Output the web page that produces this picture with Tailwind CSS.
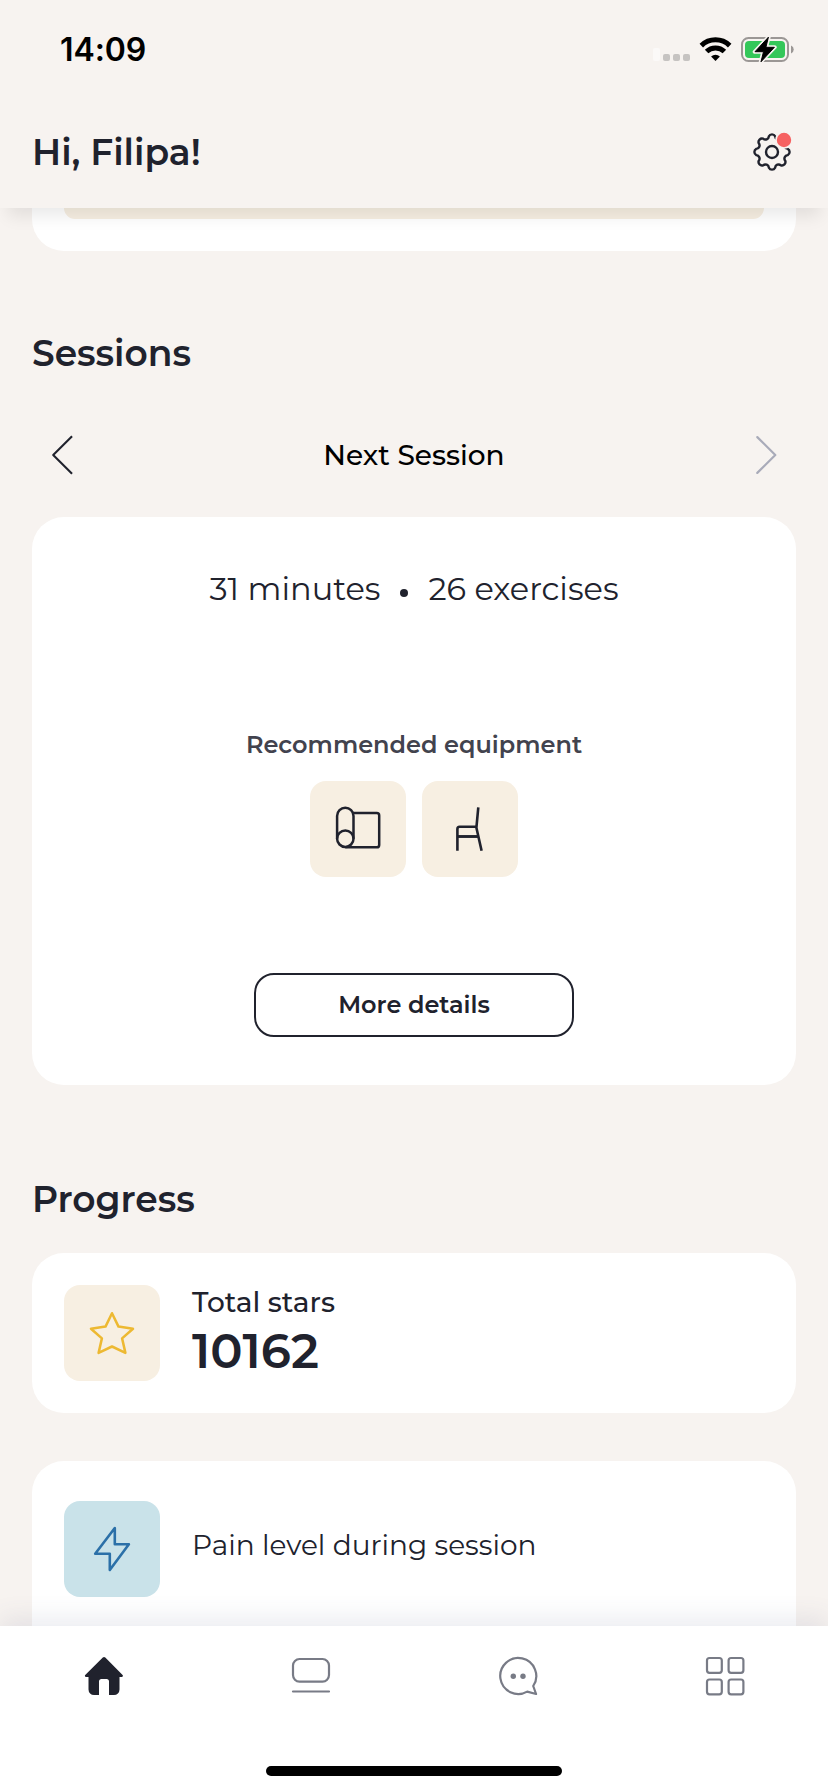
<!DOCTYPE html>
<html lang="en">
<head>
<meta charset="utf-8">
<title>Home</title>
<script src="https://cdn.jsdelivr.net/npm/@tailwindcss/browser@4"></script>
</head>
<body class="flex h-[1792px] w-[828px] flex-col overflow-hidden bg-[#f7f3f0] font-['Montserrat','Inter',sans-serif] text-[#20222d]">

<header class="z-10 flex h-[208px] shrink-0 flex-col bg-[#f7f3f0] shadow-[0_16px_16px_-8px_rgba(0,0,0,0.085)]">
  <div class="flex h-[100px] items-center justify-between pl-[60px] pr-[33px]">
    <span class="font-['Inter',sans-serif] text-[32px] font-semibold leading-[100px] tracking-[-0.1px] text-black">14:09</span>
    <svg class="h-[28px] w-[142px]" viewBox="653 36 142 28" fill="none">
      <rect x="653" y="48" width="7" height="13" rx="2" fill="#fbf9f8"/>
      <g fill="#c6c3c1"><rect x="663" y="54" width="7" height="7" rx="2"/><rect x="673" y="54" width="7" height="7" rx="2"/><rect x="683" y="54" width="7" height="7" rx="2"/></g>
      <g stroke="#000" stroke-width="5"><path d="M701.3 45.6a20.4 20.4 0 0 1 28.4 0"/><path d="M706.6 51.5a12.8 12.8 0 0 1 17.8 0"/></g>
      <path d="M715.5 61l-4.4-4.6a6.4 6.4 0 0 1 8.8 0z" fill="#000"/>
      <rect x="742" y="38" width="46" height="23" rx="6.5" stroke="#9b9795" stroke-width="2"/>
      <rect x="745" y="41" width="40" height="17" rx="4" fill="#34c759"/>
      <path d="M791 45.5a4.3 4.3 0 0 1 0 8z" fill="#9b9795"/>
      <path d="M768.7 37l-14 14.8h8.6L760.7 62l14-14.8h-8.6z" fill="#000" stroke="#f7f3f0" stroke-width="4" stroke-linejoin="round"/>
      <path d="M768.4 37.2l-13.4 14.5h8.5L761 61.8l13.4-14.5h-8.5z" fill="#000" stroke="#000" stroke-width="1" stroke-linejoin="round"/>
    </svg>
  </div>
  <div class="flex h-[104px] items-center justify-between pl-8 pr-[34px]">
    <h1 class="text-[36px] font-semibold leading-[104px]">Hi, Filipa!</h1>
    <svg class="h-[44px] w-[44px]" viewBox="-22 -22 44 44" fill="none" stroke="#20222d" stroke-width="2.4">
      <path stroke-linejoin="round" d="M15.69-3.12A3.5 3.5 0 0 1 15.69 3.12A3.5 3.5 0 0 0 13.3 8.89A3.5 3.5 0 0 1 8.89 13.3A3.5 3.5 0 0 0 3.12 15.69A3.5 3.5 0 0 1-3.12 15.69A3.5 3.5 0 0 0-8.89 13.3A3.5 3.5 0 0 1-13.3 8.89A3.5 3.5 0 0 0-15.69 3.12A3.5 3.5 0 0 1-15.69-3.12A3.5 3.5 0 0 0-13.3-8.89A3.5 3.5 0 0 1-8.89-13.3A3.5 3.5 0 0 0-3.12-15.69A3.5 3.5 0 0 1 3.12-15.69A3.5 3.5 0 0 0 8.89-13.3A3.5 3.5 0 0 1 13.3-8.89A3.5 3.5 0 0 0 15.69-3.12z"/>
      <circle r="6"/>
      <circle cx="12" cy="-12" r="8" fill="#f66161" stroke="#f7f3f0" stroke-width="1.6"/>
    </svg>
  </div>
</header>

<main class="flex flex-1 flex-col overflow-hidden px-8">
  <div class="h-[43px] shrink-0 rounded-b-[32px] bg-white px-8">
    <div class="h-[11px] rounded-b-2xl bg-[#f7efe2]"></div>
  </div>

  <h2 class="mt-[73px] h-[58px] shrink-0 text-[36px] font-semibold leading-[58px]">Sessions</h2>

  <div class="mt-[45px] flex h-[56px] shrink-0 items-center justify-between px-4">
    <svg class="h-[44px] w-7" viewBox="48 433 28 44" fill="none" stroke="#20222d" stroke-width="2.1" stroke-linejoin="round" stroke-linecap="square"><path d="M71.3 437.1L53.2 455l18.1 17.9"/></svg>
    <span class="text-[28px] font-medium text-black">Next Session</span>
    <svg class="h-[44px] w-7" viewBox="752 433 28 44" fill="none" stroke="#a9abb9" stroke-width="2.2" stroke-linejoin="round" stroke-linecap="round"><path d="M757.3 437.1L775.3 455l-18 17.9"/></svg>
  </div>

  <section class="mt-[34px] flex h-[568px] shrink-0 flex-col items-center rounded-[32px] bg-white pt-[48px]">
    <div class="flex h-[48px] items-center text-[32px] leading-[48px]">
      <span>31 minutes</span>
      <i class="mx-[20px] mt-[7px] h-2 w-2 rounded-full bg-[#20222d]"></i>
      <span>26 exercises</span>
    </div>
    <div class="mt-[112px] h-[40px] text-[24px] font-semibold leading-[40px] text-[#42434e]">Recommended equipment</div>
    <div class="mt-4 flex gap-4">
      <div class="flex h-24 w-24 items-center justify-center rounded-2xl bg-[#f7efe2]">
        <svg class="h-12 w-12" viewBox="0 0 48 48" fill="none" stroke="#20222d" stroke-width="2.5"><path d="M3.1 33.7V11a8.2 8.2 0 0 1 16.4 0v22.7"/><circle cx="11.3" cy="33.7" r="8.2"/><path d="M18.8 8.1h24a2.4 2.4 0 0 1 2.4 2.4v29.4a2.4 2.4 0 0 1-2.4 2.4H11.3"/></svg>
      </div>
      <div class="flex h-24 w-24 items-center justify-center rounded-2xl bg-[#f7efe2]">
        <svg class="h-12 w-12" viewBox="0 0 48 48" fill="none" stroke="#20222d" stroke-width="2.6"><path d="M32.3 2.3L30.4 22.7l5.2 23"/><path d="M11.4 45.8V24a2.2 2.2 0 0 1 2.2-2.2h16.8"/><path d="M11.4 31.5h21" stroke-width="2.9"/></svg>
      </div>
    </div>
    <button class="mt-24 h-16 w-80 rounded-[20px] border-2 border-[#20222d] text-[24px] font-semibold">More details</button>
  </section>

  <h2 class="mt-[85px] h-[58px] shrink-0 text-[36px] font-semibold leading-[58px]">Progress</h2>

  <section class="mt-[25px] flex h-40 shrink-0 gap-8 rounded-[32px] bg-white p-8">
    <div class="flex h-24 w-24 items-center justify-center rounded-2xl bg-[#f7efe2]">
      <svg class="h-12 w-12" viewBox="0 0 48 48" fill="none" stroke="#edb932" stroke-width="2.5" stroke-linejoin="round"><path d="M24 4.2l6.500 13.400 14.500 2.100-10.900 9.700 3.300 14.500L24 37.500l-13.400 6.400L13.900 29.400 3 19.700l14.500-2.100z"/></svg>
    </div>
    <div class="flex flex-col">
      <div class="h-[34px] text-[28px] font-medium leading-[34px]">Total stars</div>
      <div class="h-[64px] text-[48px] font-semibold leading-[64px]">10162</div>
    </div>
  </section>

  <section class="mt-12 flex h-[200px] shrink-0 gap-8 rounded-t-[32px] bg-white px-8 pt-10">
    <div class="flex h-24 w-24 items-center justify-center rounded-2xl bg-[#c9e2e9]">
      <svg class="h-12 w-12" viewBox="0 0 48 48" fill="none" stroke="#2b70a8" stroke-width="2.6" stroke-linejoin="round"><path d="M26.8 3v16.2h14.1L21.8 45V28.8H7.2z"/></svg>
    </div>
    <div class="h-[88px] text-[28px] leading-[88px]">Pain level during session</div>
  </section>
</main>

<nav class="z-10 flex h-[166px] shrink-0 flex-col items-center bg-white shadow-[0_-8px_24px_rgba(70,85,130,0.11)]">
  <div class="mt-[30px] grid h-10 w-full grid-cols-4 justify-items-center">
    <svg class="h-10 w-10" viewBox="84 1656 40 40" fill="#20222d"><path d="M102.8 1657.5a1.8 1.8 0 0 1 2.5 0l17.3 17.4a1.2 1.2 0 0 1-.8 2H119.5V1689.5a5.5 5.5 0 0 1-5.5 5.5H109V1681.5a2.5 2.5 0 0 0-2.5-2.5H101.5a2.5 2.5 0 0 0-2.5 2.5V1695H94a5.500 5.500 0 0 1-5.500-5.500V1677H86a1.200 1.200 0 0 1-.8-2z"/></svg>
    <svg class="h-10 w-10" viewBox="291 1656 40 40" fill="none" stroke="#787b86" stroke-width="2.2"><rect x="293" y="1659" width="36" height="22.6" rx="6.5"/><path d="M293 1691.5h36" stroke-linecap="round"/></svg>
    <svg class="h-10 w-10" viewBox="498 1656 40 40" fill="none" stroke="#787b86" stroke-width="2.2" stroke-linejoin="round"><path d="M533.2 1686a18 18 0 1 0-6 5.600l8.900 2.400z"/><g fill="#787b86" stroke="none"><circle cx="513.3" cy="1676.2" r="2.7"/><circle cx="523" cy="1676.2" r="2.7"/></g></svg>
    <svg class="h-10 w-10" viewBox="705 1656 40 40" fill="none" stroke="#787b86" stroke-width="2.2"><rect x="707" y="1658" width="14.8" height="14.8" rx="2.5"/><rect x="728.6" y="1658" width="14.8" height="14.8" rx="2.5"/><rect x="707" y="1679.5" width="14.8" height="14.8" rx="2.5"/><rect x="728.6" y="1679.5" width="14.8" height="14.8" rx="2.5"/></svg>
  </div>
  <div class="mt-[70px] h-[10px] w-[296px] rounded-full bg-black"></div>
</nav>
</body>
</html>
